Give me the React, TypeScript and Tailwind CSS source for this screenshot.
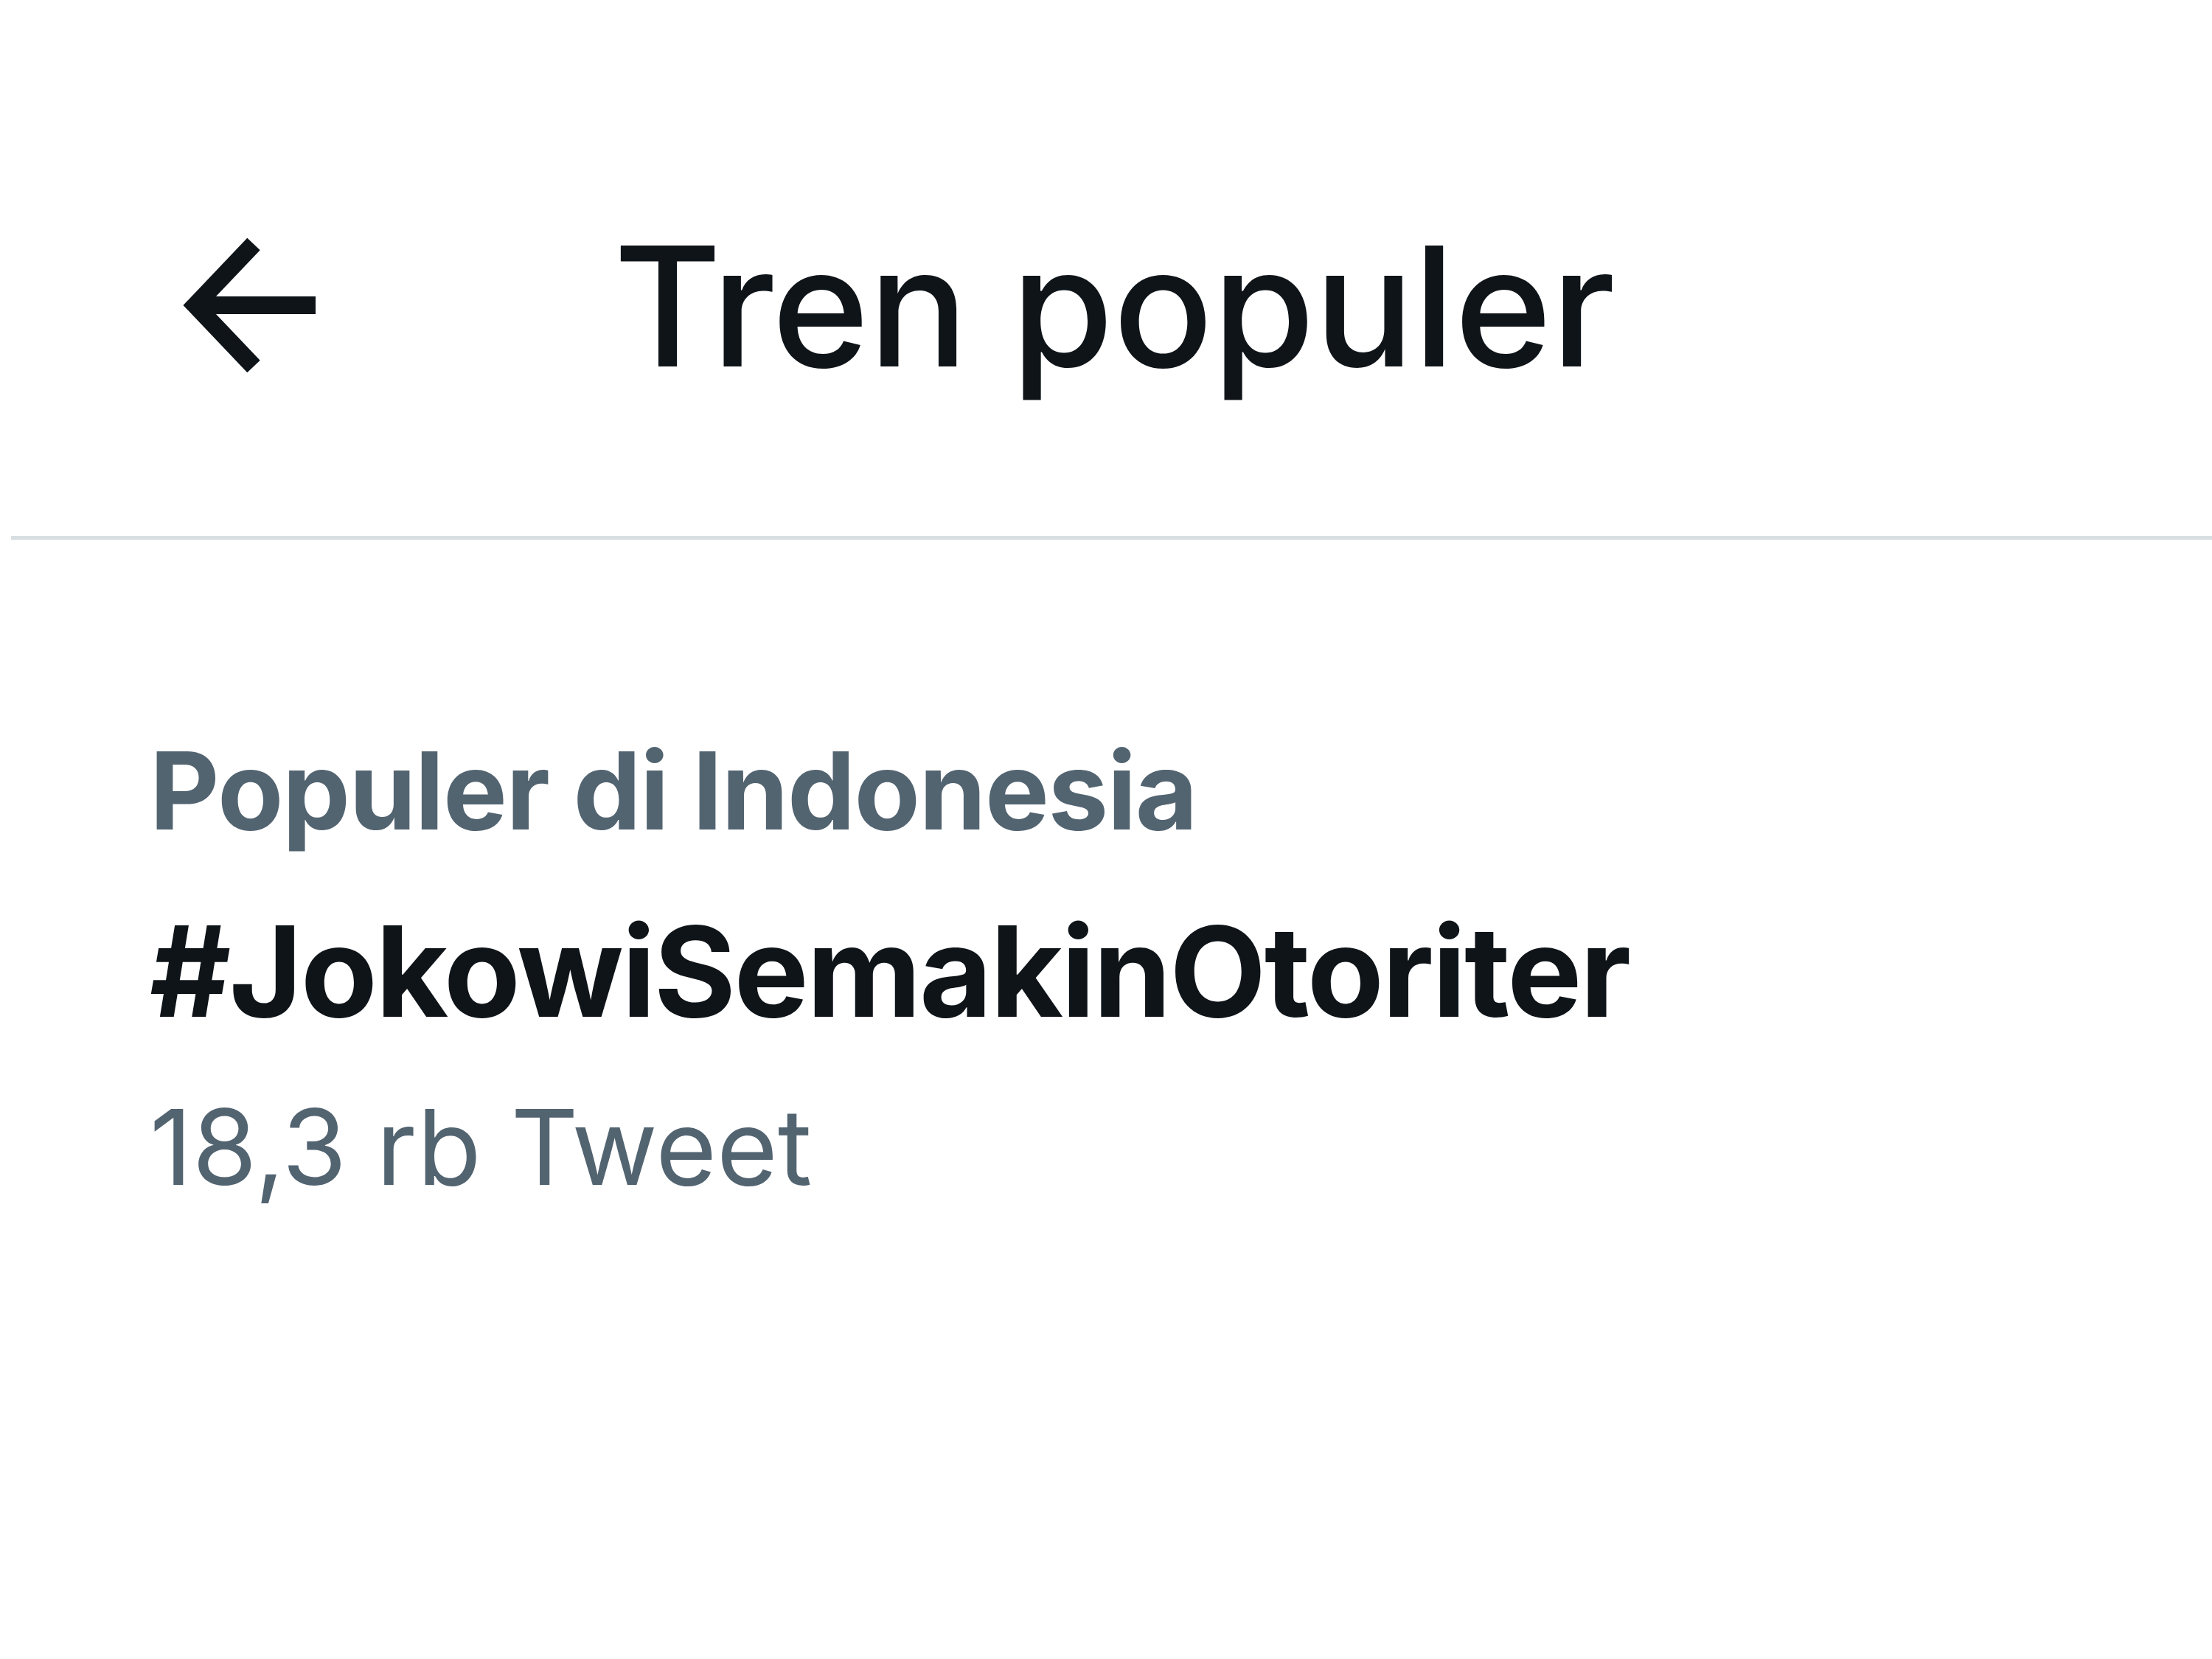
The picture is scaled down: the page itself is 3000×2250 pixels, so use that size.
import React from "react";

const BackArrow = () => (
  <svg width="240" height="230" viewBox="0 0 240 230" fill="none" className="shrink-0">
    <polyline
      points="144,31 65,114 144,197"
      stroke="#0f1419"
      strokeWidth="24"
      strokeLinejoin="miter"
      strokeLinecap="butt"
    />
    <line x1="65" y1="114" x2="228" y2="114" stroke="#0f1419" strokeWidth="24" />
  </svg>
);

export default function App() {
  return (
    <div
      className="w-[3000px] h-[2250px] bg-white overflow-hidden"
      style={{ fontFamily: "Inter, 'Noto Sans', sans-serif" }}
    >
      {/* header */}
      <div className="pt-[285px] pb-[182px]">
        <div className="flex items-center h-[260px] pl-[200px]">
          <BackArrow />
          <h1 className="ml-[392px] text-[225px] leading-[260px] font-medium text-[#0f1419] tracking-[-1px]">
            Tren populer
          </h1>
        </div>
      </div>
      <div className="ml-[15px] h-[5px] bg-[#d8dfe2]" />

      {/* trend item */}
      <div className="pt-[250px] pl-[203px] flex flex-col">
        <div className="text-[146px] leading-[180px] font-bold text-[#536471] tracking-[-1.5px]">
          Populer di Indonesia
        </div>
        <div className="mt-[55px] text-[170px] leading-[200px] font-bold text-[#0f1419] tracking-[-2.5px]">
          #JokowiSemakinOtoriter
        </div>
        <div className="mt-[48px] text-[142px] leading-[180px] text-[#536471]">
          18,3 rb Tweet
        </div>
      </div>
    </div>
  );
}
